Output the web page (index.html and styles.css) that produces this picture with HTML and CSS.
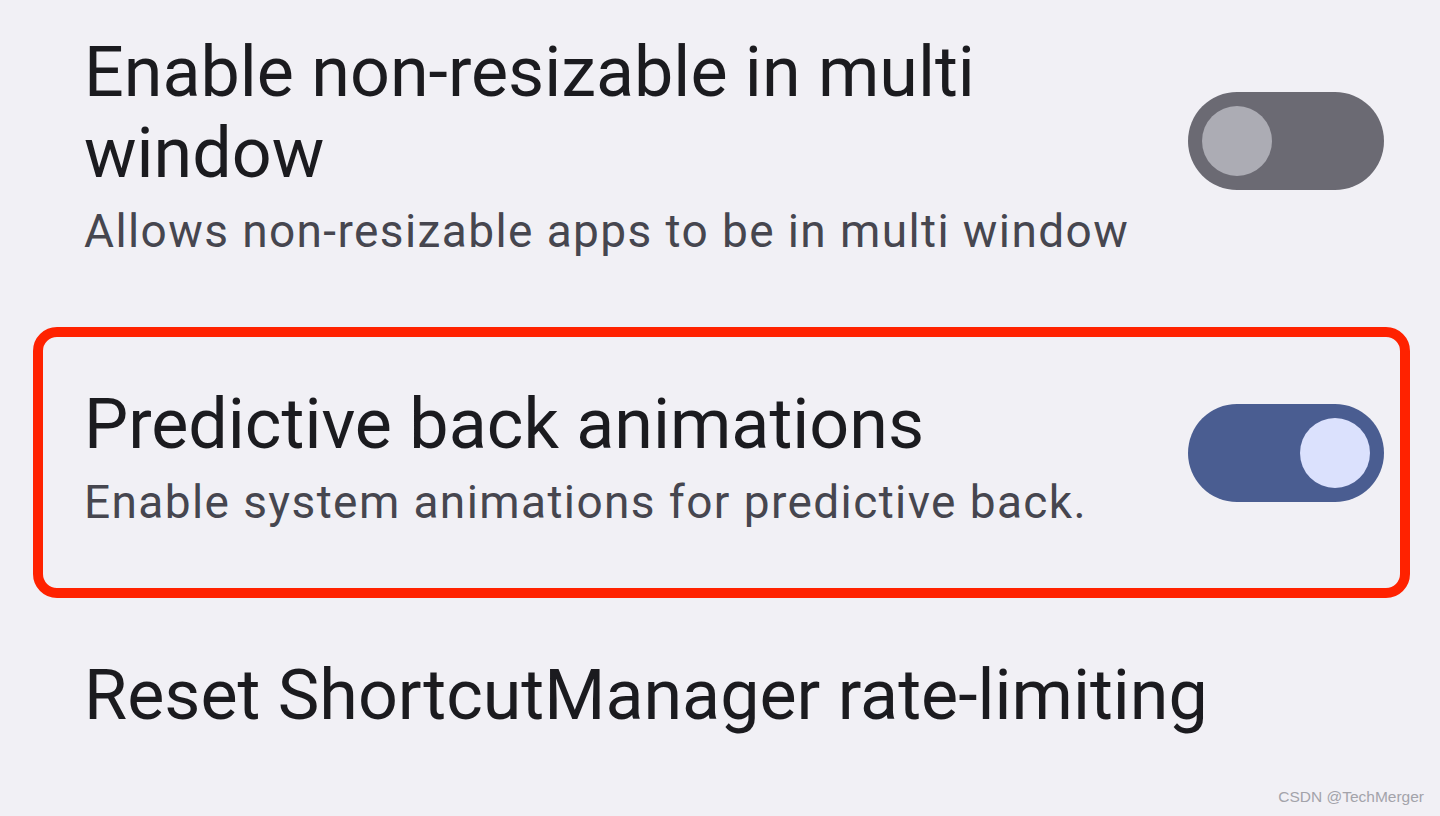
FILE: index.html
```html
<!DOCTYPE html>
<html lang="en">
<head>
  <meta charset="UTF-8" />
  <meta name="viewport" content="width=device-width, initial-scale=1.0"/>
  <title>Developer options</title>
  <link rel="stylesheet" href="styles.css">
</head>
<body>
  <div class="prefs">
    <div class="pref">
      <div class="pref-text">
        <div class="pref-title">Enable non-resizable in multi window</div>
        <div class="pref-summary">Allows non-resizable apps to be in multi window</div>
      </div>
      <div class="switch"><span class="thumb"></span></div>
    </div>

    <div class="pref highlight">
      <div class="pref-text">
        <div class="pref-title">Predictive back animations</div>
        <div class="pref-summary">Enable system animations for predictive back.</div>
      </div>
      <div class="switch on"><span class="thumb"></span></div>
    </div>

    <div class="pref">
      <div class="pref-text">
        <div class="pref-title">Reset ShortcutManager rate-limiting</div>
      </div>
    </div>
  </div>

  <div class="watermark">CSDN @TechMerger</div>
</body>
</html>
```

FILE: styles.css
```css
:root {
  --bg: #f1f0f5;
  --title: #1b1b1f;
  --summary: #46464f;
  --highlight: #ff2200;
}
body {
  margin: 0;
  background: var(--bg);
  font-family: Roboto, "Liberation Sans", Arial, sans-serif;
  height: 816px;
  overflow: hidden;
}
.prefs {
  margin: -25px 30px 0 33px;
}
.pref {
  display: flex;
  align-items: center;
  gap: 40px;
  border: 10px solid transparent;
  border-radius: 24px;
  padding: 47px 16px 59px 41px;
}
.pref.highlight {
  border-color: var(--highlight);
}
.pref-text {
  flex: 1;
}
.pref-title {
  font-size: 70px;
  line-height: 81px;
  color: var(--title);
}
.pref-summary {
  font-size: 46px;
  line-height: 54px;
  letter-spacing: 1.4px;
  margin-top: 10px;
  color: var(--summary);
}
.switch {
  flex: none;
  width: 196px;
  height: 98px;
  border-radius: 49px;
  background: #6b6a73;
  display: flex;
  align-items: center;
  padding: 0 14px;
  box-sizing: border-box;
  margin-bottom: 8px;
}
.switch .thumb {
  width: 70px;
  height: 70px;
  border-radius: 50%;
  background: #acacb4;
}
.switch.on {
  background: #4a5d91;
  justify-content: flex-end;
}
.switch.on .thumb {
  background: #dbe1fd;
}
.watermark {
  position: absolute;
  right: 16px;
  bottom: 10px;
  font-family: "Liberation Sans", Arial, sans-serif;
  font-size: 15.5px;
  color: #a3a3aa;
}
```
